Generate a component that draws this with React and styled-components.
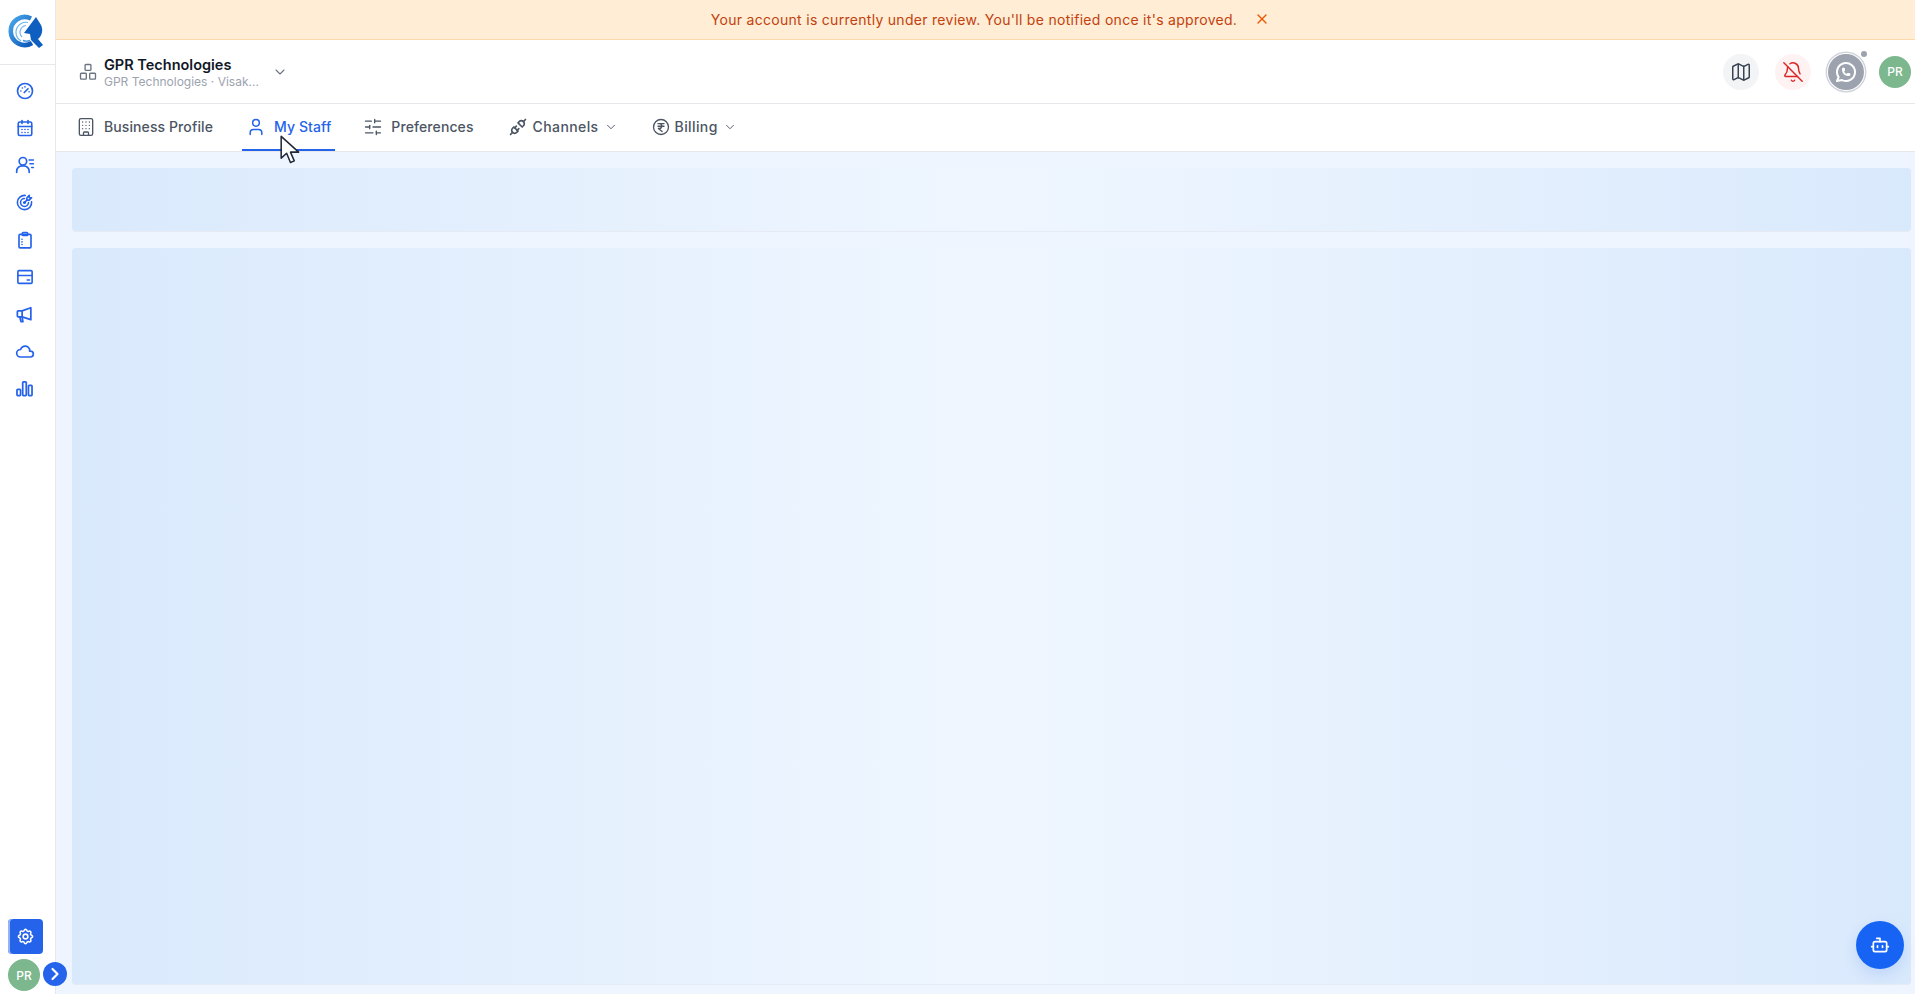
import React from "react";
import styled, { createGlobalStyle } from "styled-components";
import {
  BellOff,
  Bot,
  Building,
  CalendarDays,
  ChevronDown,
  ChevronRight,
  Map as MapIcon,
  SlidersHorizontal,
  User,
} from "lucide-react";
import {
  TbBrandWhatsapp,
  TbCloud,
  TbPlugConnected,
  TbSettings,
  TbTargetArrow,
  TbX,
} from "react-icons/tb";

const GlobalStyle = createGlobalStyle`
  html, body {
    margin: 0;
    padding: 0;
    height: 100%;
    overflow: hidden;
    background: #eff5fe;
    font-family: Inter, "Open Sans", sans-serif;
  }
  * { box-sizing: border-box; }
`;

const Logo = () => (
  <svg width="42" height="42" viewBox="0 0 42 42" fill="none">
    <defs>
      <linearGradient id="ring" x1="0" y1="0" x2="1" y2="1">
        <stop offset="0" stopColor="#4aa8ea" />
        <stop offset="1" stopColor="#0b55b8" />
      </linearGradient>
    </defs>
    <path d="M26 8.500A14 14 0 1 0 27 33" stroke="url(#ring)" strokeWidth="4.600" />
    <path d="M23 12.500A10 10 0 0 0 16 31" stroke="#6db8ee" strokeWidth="1.200" />
    <path d="M21 15.500A6.800 6.800 0 0 0 17 27" stroke="#6db8ee" strokeWidth="1.200" />
    <path d="M18 30.500A10 10 0 0 0 25 30.500" stroke="#3d8fdc" strokeWidth="1.400" />
    <path d="M31 7 L19 23 L25 24 L26 30 L34 38 L38 35 L33 29 C37 26 38.500 20 36 15 Z" fill="#0f5fc0" />
  </svg>
);

const GaugeIcon = () => (
  <svg width="18" height="18" viewBox="0 0 24 24" fill="none" stroke="currentColor" strokeWidth="2.200" strokeLinecap="round">
    <circle cx="12" cy="12" r="10" />
    <path d="M11 14l5-5M6.500 12h.01M12 6.500h.01M8.500 8h.01M17.500 13h.01" />
  </svg>
);

const UserListIcon = () => (
  <svg width="20" height="20" viewBox="0 0 24 24" fill="none" stroke="currentColor" strokeWidth="2" strokeLinecap="round">
    <circle cx="9.500" cy="7.500" r="4.500" />
    <path d="M2 21v-1.500A6.500 6.500 0 0 1 8.500 13h2a6.500 6.500 0 0 1 6.500 6.500V21" />
    <path d="M17 6h5M18 10.500h4M20 15h2" />
  </svg>
);

const ClipboardIcon = () => (
  <svg width="18" height="18" viewBox="0 0 24 24" fill="none" stroke="currentColor" strokeWidth="2.200" strokeLinecap="round">
    <rect x="4" y="4.500" width="16" height="18" rx="1.500" />
    <rect x="8.500" y="2" width="7" height="4" rx="1" />
    <path d="M8 11h.01M8 14.500h.01M8 18h.01" />
  </svg>
);

const CardIcon = () => (
  <svg width="18" height="18" viewBox="0 0 24 24" fill="none" stroke="currentColor" strokeWidth="2.200" strokeLinecap="round">
    <rect x="2.500" y="3.500" width="19" height="17" rx="1.500" />
    <path d="M2.500 10h19M15 16h3" />
  </svg>
);

const MegaphoneIcon = () => (
  <svg width="19" height="19" viewBox="0 0 24 24" fill="none" stroke="currentColor" strokeWidth="2.200" strokeLinejoin="round" strokeLinecap="round">
    <path d="M20 3.500v15L9 15H4a1 1 0 0 1-1-1V8.500a1 1 0 0 1 1-1h5Z" />
    <path d="M9 7.500V15M6 15l1.500 6h2.500L9 15.500" />
  </svg>
);

const BarsIcon = () => (
  <svg width="19" height="19" viewBox="0 0 24 24" fill="none" stroke="currentColor" strokeWidth="2.200" strokeLinejoin="round">
    <rect x="2.500" y="13" width="4.500" height="8" rx="1" />
    <rect x="9.750" y="3.500" width="4.500" height="17.500" rx="1" />
    <rect x="17" y="8" width="4.500" height="13" rx="1" />
  </svg>
);

const NetworkIcon = () => (
  <svg width="20" height="20" viewBox="0 0 24 24" fill="none" stroke="currentColor" strokeWidth="1.600">
    <rect x="8.500" y="3" width="7" height="7" rx="1" />
    <rect x="3" y="13.500" width="7" height="7" rx="1" />
    <rect x="14" y="13.500" width="7" height="7" rx="1" />
  </svg>
);

const RupeeIcon = () => (
  <svg width="18" height="18" viewBox="0 0 24 24" fill="none" stroke="currentColor" strokeWidth="1.800" strokeLinecap="round" strokeLinejoin="round">
    <circle cx="12" cy="12" r="10" />
    <path d="M8 7.500h8M8 11h8M10 7.500c4 0 4 6.500 0 6.500H8.500l5 4" />
  </svg>
);

const CursorIcon = () => (
  <svg width="24" height="31" viewBox="0 0 22 28">
    <path
      d="M2 1v20l5-4.500 3.500 8.500 3.500-1.500-3.500-8H18Z"
      fill="#fff"
      stroke="#1f2937"
      strokeWidth="1.400"
      strokeLinejoin="round"
    />
  </svg>
);

const railIcons = [
  { key: "dashboard", icon: <GaugeIcon /> },
  { key: "calendar", icon: <CalendarDays size={18} strokeWidth={2.2} /> },
  { key: "contacts", icon: <UserListIcon /> },
  { key: "goals", icon: <TbTargetArrow size={19} /> },
  { key: "tasks", icon: <ClipboardIcon /> },
  { key: "cards", icon: <CardIcon /> },
  { key: "campaigns", icon: <MegaphoneIcon /> },
  { key: "cloud", icon: <TbCloud size={20} /> },
  { key: "reports", icon: <BarsIcon /> },
];

const tabs = [
  { label: "Business Profile", icon: <Building size={20} strokeWidth={1.6} /> },
  { label: "My Staff", icon: <User size={20} strokeWidth={1.8} />, active: true },
  { label: "Preferences", icon: <SlidersHorizontal size={20} strokeWidth={1.6} /> },
  { label: "Channels", icon: <TbPlugConnected size={20} />, menu: true },
  { label: "Billing", icon: <RupeeIcon />, menu: true },
];

const App = () => {
  return (
    <Shell>
      <GlobalStyle />
      <Rail>
        <LogoBox>
          <Logo />
        </LogoBox>
        <RailNav>
          {railIcons.map((item) => (
            <RailItem key={item.key}>{item.icon}</RailItem>
          ))}
        </RailNav>
        <RailFoot>
          <SettingsButton>
            <TbSettings size={19} />
          </SettingsButton>
          <Avatar>PR</Avatar>
          <ExpandButton>
            <ChevronRight size={20} strokeWidth={2.6} />
          </ExpandButton>
        </RailFoot>
      </Rail>

      <Main>
        <Banner>
          <span>Your account is currently under review. You'll be notified once it's approved.</span>
          <BannerClose>
            <TbX size={16} />
          </BannerClose>
        </Banner>

        <Header>
          <Company>
            <CompanyIcon>
              <NetworkIcon />
            </CompanyIcon>
            <CompanyText>
              <CompanyName>GPR Technologies</CompanyName>
              <CompanySub>GPR Technologies · Visak...</CompanySub>
            </CompanyText>
            <CompanyChevron>
              <ChevronDown size={16} strokeWidth={1.6} />
            </CompanyChevron>
          </Company>
          <HeaderActions>
            <RoundButton>
              <MapIcon size={22} strokeWidth={1.6} />
            </RoundButton>
            <RoundButton $tone="alert">
              <BellOff size={22} strokeWidth={1.6} />
            </RoundButton>
            <WhatsappButton>
              <TbBrandWhatsapp size={24} />
              <StatusDot />
            </WhatsappButton>
            <Avatar>PR</Avatar>
          </HeaderActions>
        </Header>

        <TabBar>
          {tabs.map((tab) => (
            <Tab key={tab.label} $active={tab.active} $menu={tab.menu}>
              {tab.icon}
              <span>{tab.label}</span>
              {tab.menu && <ChevronDown size={14} strokeWidth={1.6} />}
            </Tab>
          ))}
          <Cursor>
            <CursorIcon />
          </Cursor>
        </TabBar>

        <Content>
          <Skeleton $height="64px" />
          <Skeleton $grow />
        </Content>

        <ChatButton>
          <Bot size={20} strokeWidth={2} />
        </ChatButton>
      </Main>
    </Shell>
  );
};

const Shell = styled.div`
  display: flex;
  width: 100vw;
  height: 100vh;
  overflow: hidden;
`;

const Rail = styled.aside`
  position: relative;
  flex: 0 0 56px;
  display: flex;
  flex-direction: column;
  background: #fff;
  border-right: 1px solid #e5e7eb;
`;

const LogoBox = styled.div`
  height: 65px;
  display: flex;
  align-items: center;
  justify-content: center;
  padding: 0 3px 3px 0;
  border-bottom: 1px solid #e5e7eb;
`;

const RailNav = styled.nav`
  display: flex;
  flex-direction: column;
  align-items: center;
  gap: 7.300px;
  padding: 10.500px 6px 0 0;
`;

const RailItem = styled.div`
  width: 30px;
  height: 30px;
  display: flex;
  align-items: center;
  justify-content: center;
  color: #2563eb;
`;

const RailFoot = styled.div`
  margin-top: auto;
  display: flex;
  flex-direction: column;
  gap: 5px;
  padding: 0 0 3px 8px;
`;

const SettingsButton = styled.button`
  width: 35px;
  height: 35px;
  padding: 0;
  display: flex;
  align-items: center;
  justify-content: center;
  color: #fff;
  background: #2563eb;
  border: none;
  border-radius: 4px;
  box-shadow: inset 2px 0 0 #93b4f5;
`;

const Avatar = styled.div`
  width: 32px;
  height: 32px;
  flex: none;
  display: flex;
  align-items: center;
  justify-content: center;
  border-radius: 50%;
  color: #fff;
  background: #7cb78e;
  font-size: 12px;
  font-weight: 500;
`;

const ExpandButton = styled.button`
  position: absolute;
  left: 43px;
  bottom: 8px;
  width: 24px;
  height: 24px;
  padding: 0;
  display: flex;
  align-items: center;
  justify-content: center;
  color: #fff;
  background: #2563eb;
  border: none;
  border-radius: 50%;
  z-index: 2;
`;

const Main = styled.div`
  position: relative;
  flex: 1;
  min-width: 0;
  display: flex;
  flex-direction: column;
`;

const Banner = styled.div`
  flex: 0 0 40px;
  display: flex;
  align-items: center;
  justify-content: center;
  gap: 17px;
  padding: 0 0 1px 10px;
  color: #c2410c;
  background: #ffedd5;
  border-bottom: 1px solid #fed7aa;
  font-size: 14px;
  letter-spacing: 0.29px;
`;

const BannerClose = styled.span`
  display: flex;
  color: #ea580c;
`;

const Header = styled.header`
  flex: 0 0 64px;
  display: flex;
  align-items: center;
  justify-content: space-between;
  padding: 0 4px 0 22px;
  background: #fff;
  border-bottom: 1px solid #e5e7eb;
`;

const Company = styled.div`
  display: flex;
  align-items: center;
`;

const CompanyIcon = styled.div`
  display: flex;
  color: #6b7280;
  margin-right: 6px;
`;

const CompanyText = styled.div`
  display: flex;
  flex-direction: column;
  width: 164px;
  padding-top: 2px;
`;

const CompanyName = styled.div`
  color: #111827;
  font-size: 14.500px;
  font-weight: 600;
  line-height: 19px;
`;

const CompanySub = styled.div`
  color: #9ca3af;
  font-size: 12px;
  line-height: 16px;
`;

const CompanyChevron = styled.div`
  display: flex;
  color: #6b7280;
  margin-left: 4px;
`;

const HeaderActions = styled.div`
  display: flex;
  align-items: center;
  gap: 16px;
`;

const RoundButton = styled.button`
  width: 36px;
  height: 36px;
  padding: 0;
  display: flex;
  align-items: center;
  justify-content: center;
  border: none;
  border-radius: 50%;
  color: ${(p) => (p.$tone === "alert" ? "#dc2626" : "#374151")};
  background: ${(p) => (p.$tone === "alert" ? "#fef2f2" : "#f3f4f6")};
`;

const WhatsappButton = styled.button`
  position: relative;
  width: 36px;
  height: 36px;
  margin: 0 -1px 0 1px;
  padding: 0;
  display: flex;
  align-items: center;
  justify-content: center;
  color: #fff;
  background: #9ca3af;
  border: none;
  border-radius: 50%;
  box-shadow: 0 0 0 1px #fff, 0 0 0 2.500px #d1d5db;
`;

const StatusDot = styled.span`
  position: absolute;
  top: -3px;
  right: -3px;
  width: 6px;
  height: 6px;
  border-radius: 50%;
  background: #9ca3af;
`;

const TabBar = styled.nav`
  position: relative;
  flex: 0 0 48px;
  display: flex;
  align-items: stretch;
  gap: 24px;
  padding: 0 0 0 16px;
  background: #fff;
  border-bottom: 1px solid #e5e7eb;
`;

const Tab = styled.div`
  display: flex;
  align-items: center;
  gap: ${(p) => (p.$menu ? "5px" : "8px")};
  padding: 0 4px 0 ${(p) => (p.$menu ? "6px" : "4px")};
  margin-left: ${(p) => (p.$active ? "1px" : "0")};
  color: ${(p) => (p.$active ? "#2563eb" : "#4b5563")};
  border-bottom: 2px solid ${(p) => (p.$active ? "#2563eb" : "transparent")};
  font-size: 14px;
  font-weight: 500;
  letter-spacing: ${(p) => (p.$menu ? "0.4px" : "0.1px")};
`;

const Cursor = styled.div`
  position: absolute;
  left: 223px;
  top: 31px;
  display: flex;
  z-index: 3;
`;

const Content = styled.main`
  flex: 1;
  min-height: 0;
  display: flex;
  flex-direction: column;
  gap: 16px;
  padding: 16px 4px 9px 16px;
  background: #eff5fe;
`;

const Skeleton = styled.div`
  ${(p) => (p.$grow ? "flex: 1;" : `height: ${p.$height};`)}
  border-radius: 4px;
  border-bottom: 1px solid #e5eaf3;
  background: linear-gradient(90deg, #d9e9fc 0%, #eff6ff 50%, #d9e9fc 100%);
`;

const ChatButton = styled.button`
  position: absolute;
  right: 11px;
  bottom: 25px;
  width: 48px;
  height: 48px;
  padding: 0;
  display: flex;
  align-items: center;
  justify-content: center;
  color: #fff;
  background: #1764f4;
  border: none;
  border-radius: 50%;
  box-shadow: 0 6px 14px rgba(37, 99, 235, 0.15);
`;

export default App;
